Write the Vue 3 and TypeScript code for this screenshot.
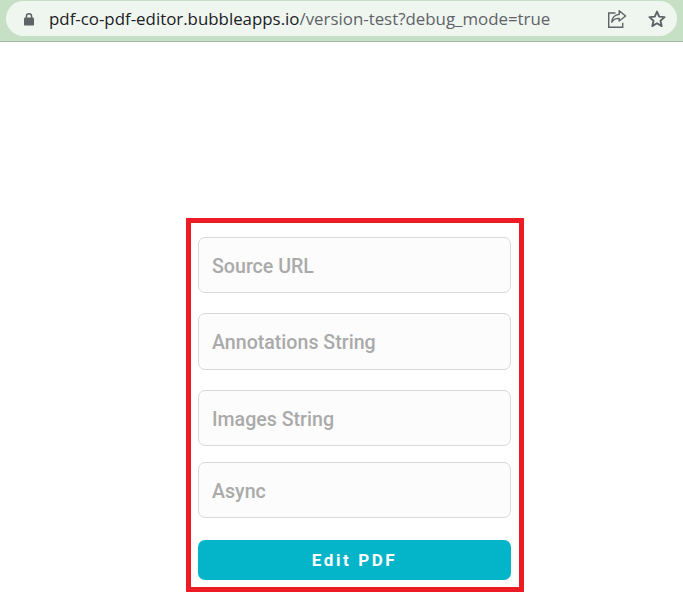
<script setup lang="ts">
const fields = [
  { label: 'Source URL', gap: 'gap-20', height: 'tall' },
  { label: 'Annotations String', gap: 'gap-20', height: 'taller' },
  { label: 'Images String', gap: 'gap-16', height: 'tall' },
  { label: 'Async', gap: 'gap-22', height: 'tall' },
]
</script>

<template>
  <div class="page">
    <header class="chrome">
      <div class="address">
        <svg class="lock" width="12" height="14" viewBox="0 0 12 14">
          <path d="M3.4 6V4.4a2.6 2.6 0 0 1 5.2 0V6" fill="none" stroke="#5f6368" stroke-width="1.5" />
          <rect x="1" y="5.6" width="10" height="8" rx="1.2" fill="#5f6368" />
        </svg>
        <span class="url"><span class="host">pdf-co-pdf-editor.bubbleapps.io</span>/version-test?debug_mode=true</span>
        <svg class="share" width="20" height="20" viewBox="0 0 20 20" fill="none" stroke="#5f6368" stroke-width="1.4">
          <path d="M8.5 4H1.7v14.3h14v-4.5" />
          <path d="M12.2 1.8l6.4 5.2-6.4 5V9.4c-3.4-.2-5.6.9-7.4 3.8.3-4.6 3-7.4 7.4-7.8z" stroke-linejoin="round" />
        </svg>
        <svg class="star" width="20" height="20" viewBox="0 0 20 20" fill="none" stroke="#5f6368" stroke-width="1.9">
          <path d="M10 2.6l2.2 5 5.4.5-4.1 3.6 1.2 5.4L10 14.3l-4.7 2.8 1.2-5.4-4.1-3.6 5.4-.5z" stroke-linejoin="round" />
        </svg>
      </div>
    </header>

    <main class="main">
      <section class="form">
        <div v-for="field in fields" :key="field.label" class="field" :class="[field.gap, field.height]">
          {{ field.label }}
        </div>
        <button class="submit" type="button">Edit PDF</button>
      </section>
    </main>
  </div>
</template>

<style scoped>
.page {
  width: 683px;
  height: 598px;
  overflow: hidden;
  background: #fff;
  font-family: "Liberation Sans", sans-serif;
}

.chrome {
  box-sizing: border-box;
  height: 42px;
  padding: 1px 6px 0;
  background: #c5e0c5;
  border-bottom: 1px solid #a3bba3;
}

.address {
  display: flex;
  align-items: center;
  height: 35px;
  padding: 0 10px 0 17px;
  background: #eff6f0;
  border-radius: 18px;
}

.lock {
  flex: none;
  margin-top: 1px;
}

.url {
  flex: 1;
  margin-left: 14px;
  font-family: "Open Sans", sans-serif;
  font-size: 16.87px;
  color: #5f6368;
  white-space: nowrap;
}

.host {
  color: #202124;
}

.share {
  flex: none;
  margin-right: 20px;
}

.star {
  flex: none;
}

.main {
  display: flex;
  padding-top: 176px;
  padding-left: 186px;
}

.form {
  box-sizing: border-box;
  display: flex;
  flex-direction: column;
  width: 338px;
  height: 374px;
  padding: 14px 8px 7px 7px;
  border: 5px solid #ed1c24;
}

.field {
  box-sizing: border-box;
  display: flex;
  align-items: center;
  padding: 3px 13px 0;
  background: #fcfcfc;
  border: 1px solid #d9d9d9;
  border-radius: 7px;
  font-family: Roboto, sans-serif;
  font-size: 19.6px;
  font-weight: 500;
  color: #aaaaaa;
}

.tall {
  height: 56px;
}

.taller {
  height: 57px;
  padding-top: 1px;
}

.gap-20 {
  margin-bottom: 20px;
}

.gap-16 {
  margin-bottom: 16px;
}

.gap-22 {
  margin-bottom: 22px;
}

.submit {
  height: 40px;
  padding: 0;
  background: #04b4c8;
  border: none;
  border-radius: 7px;
  font-family: Roboto, sans-serif;
  font-size: 17px;
  font-weight: 700;
  letter-spacing: 2.6px;
  color: #fff;
}
</style>
